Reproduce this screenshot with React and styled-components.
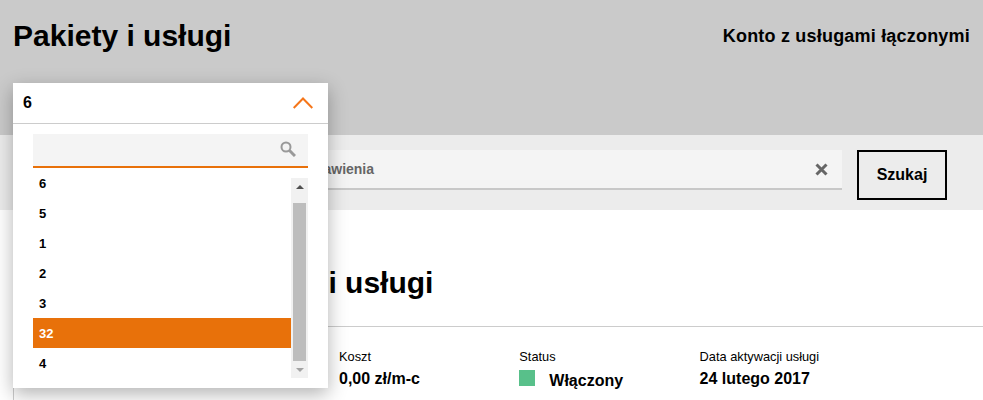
import React from 'react';
import styled, { createGlobalStyle } from 'styled-components';

const GlobalStyle = createGlobalStyle`
  html, body {
    margin: 0;
    padding: 0;
    height: 100%;
    overflow: hidden;
    background: #fff;
    font-family: 'Liberation Sans', Arial, sans-serif;
    color: #000;
  }
`;

const Page = styled.div`
  position: relative;
  width: 983px;
  height: 400px;
  overflow: hidden;
`;

const Header = styled.header`
  height: 135px;
  box-sizing: border-box;
  padding: 0 13px;
  background: #cacaca;
  display: flex;
  justify-content: space-between;
  align-items: flex-start;
`;

const Title = styled.h1`
  margin: 19px 0 0;
  font-size: 30px;
  line-height: 34px;
  font-weight: 700;
`;

const AccountType = styled.div`
  margin-top: 26px;
  font-size: 18px;
  line-height: 20px;
  letter-spacing: 0.2px;
  font-weight: 700;
`;

const SearchBand = styled.div`
  height: 75px;
  box-sizing: border-box;
  padding: 15px 36px 0 245px;
  background: #ececec;
  display: flex;
  align-items: flex-start;
  gap: 15px;
`;

const SearchField = styled.div`
  flex: 1;
  height: 40px;
  box-sizing: border-box;
  padding: 0 14px 0 10px;
  background: #f4f4f4;
  border-bottom: 2px solid #c8c8c8;
  display: flex;
  align-items: center;
  justify-content: space-between;
`;

const SearchText = styled.span`
  font-size: 14px;
  font-weight: 700;
  color: #666;
`;

const SearchButton = styled.button`
  width: 90px;
  height: 50px;
  box-sizing: border-box;
  padding: 0;
  background: transparent;
  border: 2px solid #000;
  font-family: inherit;
  font-size: 16px;
  font-weight: 700;
  color: #000;
`;

const Content = styled.main`
  margin-left: 13px;
  height: 190px;
  border-left: 1px solid #ccc;
  box-sizing: border-box;
`;

const Heading = styled.h2`
  margin: 0;
  height: 117px;
  box-sizing: border-box;
  padding: 56px 0 0 201px;
  font-size: 30px;
  line-height: 34px;
  font-weight: 700;
  border-bottom: 1px solid #ccc;
`;

const Details = styled.div`
  padding: 22px 0 0 325px;
  display: flex;
`;

const Detail = styled.div`
  width: 180.3px;
`;

const DetailLabel = styled.div`
  font-size: 12.8px;
  line-height: 16px;
`;

const DetailValue = styled.div`
  margin-top: 4px;
  font-size: 16px;
  line-height: 20px;
  font-weight: 700;
`;

const StatusValue = styled(DetailValue)`
  display: flex;
  align-items: flex-start;
`;

const StatusDot = styled.span`
  width: 16px;
  height: 16px;
  margin: 1px 14px 0 0;
  background: #58c08a;
`;

const StatusText = styled.span`
  margin-top: 2px;
`;

const Dropdown = styled.div`
  position: absolute;
  left: 13px;
  top: 83px;
  width: 315px;
  height: 305px;
  background: #fff;
  box-shadow: 0 6px 18px rgba(0, 0, 0, 0.3);
`;

const DropdownHead = styled.div`
  height: 41px;
  box-sizing: border-box;
  padding: 0 15px 1px 10px;
  border-bottom: 1px solid #ccc;
  display: flex;
  align-items: center;
  justify-content: space-between;
  font-size: 16px;
  font-weight: 700;
`;

const DropdownBody = styled.div`
  padding: 10px 20px 0;
`;

const FilterBox = styled.div`
  height: 34px;
  box-sizing: border-box;
  padding: 0 12px 2px 0;
  background: #f4f4f4;
  border-bottom: 2px solid #e8710a;
  display: flex;
  align-items: center;
  justify-content: flex-end;
`;

const ListWrap = styled.div`
  margin-top: 10px;
  height: 200px;
  display: flex;
`;

const OptionList = styled.ul`
  flex: 1;
  margin: 0;
  padding: 0;
  list-style: none;
`;

const Option = styled.li`
  height: 30px;
  padding-left: 6px;
  font-size: 13px;
  line-height: 31px;
  font-weight: 700;
  color: ${(props) => (props.$active ? '#fff' : '#000')};
  background: ${(props) => (props.$active ? '#e8710a' : 'transparent')};
  &:first-child {
    height: 20px;
    line-height: 11px;
  }
`;

const Scrollbar = styled.div`
  width: 17px;
  background: #f1f1f1;
  display: flex;
  flex-direction: column;
  align-items: center;
`;

const ScrollArrow = styled.div`
  height: 17px;
  flex: none;
  display: flex;
  align-items: center;
  justify-content: center;
`;

const ScrollTrack = styled.div`
  flex: 1;
  width: 100%;
  padding: 8px 2px 0;
  box-sizing: border-box;
`;

const ScrollThumb = styled.div`
  height: 158px;
  background: #bdbdbd;
`;

const options = ['6', '5', '1', '2', '3', '32', '4'];

function App() {
  return (
    <Page>
      <GlobalStyle />
      <Header>
        <Title>Pakiety i usługi</Title>
        <AccountType>Konto z usługami łączonymi</AccountType>
      </Header>
      <SearchBand>
        <SearchField>
          <SearchText>Nazwa ustawienia</SearchText>
          <svg width="13" height="13" viewBox="0 0 13 13">
            <path d="M1.5 1.5 L11.5 11.5 M11.5 1.5 L1.5 11.5" stroke="#666" strokeWidth="3" fill="none" />
          </svg>
        </SearchField>
        <SearchButton>Szukaj</SearchButton>
      </SearchBand>
      <Content>
        <Heading>Pakiety i usługi</Heading>
        <Details>
          <Detail>
            <DetailLabel>Koszt</DetailLabel>
            <DetailValue>0,00 zł/m-c</DetailValue>
          </Detail>
          <Detail>
            <DetailLabel>Status</DetailLabel>
            <StatusValue>
              <StatusDot />
              <StatusText>Włączony</StatusText>
            </StatusValue>
          </Detail>
          <Detail>
            <DetailLabel>Data aktywacji usługi</DetailLabel>
            <DetailValue>24 lutego 2017</DetailValue>
          </Detail>
        </Details>
      </Content>
      <Dropdown>
        <DropdownHead>
          6
          <svg width="20" height="12" viewBox="0 0 20 12">
            <path d="M0.7 11 L10 1.5 L19.3 11" stroke="#f5761a" strokeWidth="2" fill="none" />
          </svg>
        </DropdownHead>
        <DropdownBody>
          <FilterBox>
            <svg width="16" height="16" viewBox="0 0 16 16">
              <circle cx="6" cy="6" r="4.5" stroke="#999" strokeWidth="2" fill="none" />
              <path d="M9.5 9.5 L15 15" stroke="#999" strokeWidth="3" fill="none" />
            </svg>
          </FilterBox>
          <ListWrap>
            <OptionList>
              {options.map((o) => (
                <Option key={o} $active={o === '32'}>
                  {o}
                </Option>
              ))}
            </OptionList>
            <Scrollbar>
              <ScrollArrow>
                <svg width="8" height="4" viewBox="0 0 8 4">
                  <path d="M0 4 L4 0 L8 4 Z" fill="#505050" />
                </svg>
              </ScrollArrow>
              <ScrollTrack>
                <ScrollThumb />
              </ScrollTrack>
              <ScrollArrow>
                <svg width="8" height="4" viewBox="0 0 8 4">
                  <path d="M0 0 L4 4 L8 0 Z" fill="#a3a3a3" />
                </svg>
              </ScrollArrow>
            </Scrollbar>
          </ListWrap>
        </DropdownBody>
      </Dropdown>
    </Page>
  );
}

export default App;
